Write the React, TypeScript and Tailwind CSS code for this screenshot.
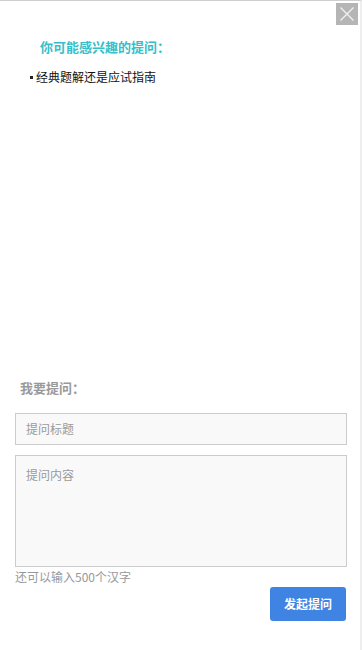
import React from "react";

export default function App() {
  return (
    <div
      className="relative w-[362px] h-[650px] bg-white border-t border-[#cfcfcf] border-r-2 border-r-[#eeeeee] flex flex-col"
      style={{ fontFamily: '"Noto Sans CJK SC", "Noto Sans", sans-serif' }}
    >
      <button className="absolute top-[2px] right-[2px] w-[22px] h-[22px] bg-[#b5b5b5] flex items-center justify-center">
        <svg width="16" height="16" viewBox="0 0 16 16">
          <path d="M1.5 1.5 L14.5 14.5 M14.5 1.5 L1.5 14.5" stroke="#f2f2f2" strokeWidth="1.3" />
        </svg>
      </button>

      <div className="pl-[40px] pt-[36px] text-[13px] leading-[20px] font-bold text-[#35bfca]">
        你可能感兴趣的提问：
      </div>
      <div className="pl-[30px] mt-[10px] text-[12px] leading-[20px] text-[#111] flex items-center">
        <span className="inline-block w-[3px] h-[3px] bg-[#222] mr-[3px]"></span>
        经典题解还是应试指南
      </div>

      <div className="flex-1"></div>

      <div className="pl-[15px] pr-[13px] pb-[29px]">
        <div className="pl-[5px] text-[13px] leading-[20px] font-bold text-[#999]">我要提问：</div>
        <div className="mt-[15px] h-[32px] border border-[#cccccc] bg-[#f9f9f9] flex items-center pl-[10px] text-[12px] text-[#999]">
          提问标题
        </div>
        <div className="mt-[10px] h-[112px] border border-[#cccccc] bg-[#f9f9f9] pl-[10px] pt-[10px] text-[12px] leading-[18px] text-[#999]">
          提问内容
        </div>
        <div className="text-[12px] leading-[20px] text-[#999]">还可以输入500个汉字</div>
        <div className="flex justify-end">
          <button className="w-[76px] h-[34px] rounded-[3px] bg-[#3f84e3] text-white text-[12px] font-bold mr-[1px]">
            发起提问
          </button>
        </div>
      </div>
    </div>
  );
}
